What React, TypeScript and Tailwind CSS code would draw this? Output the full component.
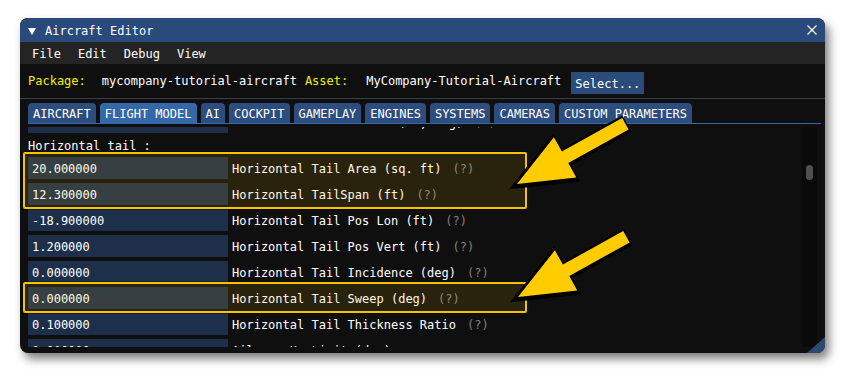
import React from "react";

const rows = [
  { v: "20.000000", l: "Horizontal Tail Area (sq. ft)" },
  { v: "12.300000", l: "Horizontal TailSpan (ft)" },
  { v: "-18.900000", l: "Horizontal Tail Pos Lon (ft)" },
  { v: "1.200000", l: "Horizontal Tail Pos Vert (ft)" },
  { v: "0.000000", l: "Horizontal Tail Incidence (deg)" },
  { v: "0.000000", l: "Horizontal Tail Sweep (deg)" },
  { v: "0.100000", l: "Horizontal Tail Thickness Ratio" },
  { v: "0.000000", l: "Aileron Up Limit (deg)" },
];

const tabs = [
  "AIRCRAFT",
  "FLIGHT MODEL",
  "AI",
  "COCKPIT",
  "GAMEPLAY",
  "ENGINES",
  "SYSTEMS",
  "CAMERAS",
  "CUSTOM PARAMETERS",
];

function Row({ v, l, help = true }: { v: string; l: string; help?: boolean }) {
  return (
    <div className="flex items-center h-[22px] shrink-0 pt-[1px]">
      <div className="w-[200px] h-[22px] -mt-[1px] bg-[#1d2f4b] px-[4px] pt-[1px] flex items-center">{v}</div>
      <div className="ml-[4px] whitespace-pre">{l}</div>
      {help && <div className="ml-[11px] text-[#808080]">(?)</div>}
    </div>
  );
}

// yellow callout arrow, tip at (517,184)
const arrow =
  "517,184 576.3,177.4 568.3,163 628.6,129.4 622.2,118 561.9,151.6 553.9,137.2";

export default function App() {
  return (
    <div className="relative w-[845px] h-[376px] overflow-hidden bg-white pt-[18px] pl-[20px] font-['DejaVu_Sans_Mono',monospace] text-[12px] text-white">
      {/* editor window */}
      <div className="relative w-[805px] h-[335px] bg-[#0f0f0f] rounded-[8px] overflow-hidden flex flex-col shadow-[4px_6px_10px_rgba(0,0,0,0.5)]">
        <div className="h-[24px] shrink-0 bg-[#294a7a] flex items-center pl-[8px] pr-[8px] pt-[2px]">
          <svg width="8" height="7" viewBox="0 0 8 7">
            <path d="M0 0 L8 0 L4 7 Z" fill="#fff" />
          </svg>
          <span className="ml-[9px]">Aircraft Editor</span>
          <svg className="ml-auto -mt-[2px]" width="10" height="10" viewBox="0 0 10 10">
            <path d="M0.5 0.5 L9.5 9.5 M9.5 0.5 L0.5 9.5" stroke="#fff" strokeWidth="1.2" />
          </svg>
        </div>

        <div className="h-[22px] shrink-0 bg-[#242424] flex items-center pl-[12px] gap-[17px] pt-[1px]">
          <span>File</span>
          <span>Edit</span>
          <span>Debug</span>
          <span>View</span>
        </div>

        <div className="mt-[8px] h-[22px] shrink-0 flex items-start px-[8px] leading-[16px]">
          <span className="pt-[1px] text-[#f0f000]">Package:</span>
          <span className="pt-[1px] ml-[16px]">mycompany-tutorial-aircraft</span>
          <span className="pt-[1px] ml-[8px] text-[#f0f000]">Asset:</span>
          <span className="pt-[1px] ml-[18px]">MyCompany-Tutorial-Aircraft</span>
          <div className="ml-[10px] h-[22px] w-[73px] bg-[#2b4b7b] px-[4px] pt-[1px] flex items-center">Select...</div>
        </div>

        <div className="mt-[4px] h-px shrink-0 bg-[#3e3e47]" />

        <div className="mt-[4px] ml-[8px] mr-[4px] shrink-0 flex flex-col">
          <div className="h-[20px] flex gap-[4px]">
            {tabs.map((t) => (
              <div
                key={t}
                className={`shrink-0 whitespace-nowrap px-[5px] pt-[2px] rounded-t-[4px] flex items-center leading-[14px] ${
                  t === "FLIGHT MODEL" ? "bg-[#3568a8]" : "bg-[#2d4d7e]"
                }`}
              >
                {t}
              </div>
            ))}
          </div>
          <div className="h-px bg-[#3568a8]" />
        </div>

        <div className="mt-[3px] h-[220px] shrink-0 flex pl-[8px]">
          <div className="w-[774px] h-[220px] overflow-hidden">
            <div className="-mt-[16px] flex flex-col gap-[4px]">
              <Row v="0.000000" l="Horizontal Tail Moment (ft, deg)" />
              <div className="h-[16px] leading-[16px] pt-[1px] shrink-0">Horizontal tail :</div>
              {rows.map((r, i) => (
                <Row key={i} v={r.v} l={r.l} help={!r.l.startsWith("Aileron")} />
              ))}
            </div>
          </div>
          <div className="w-[15px] h-[220px] bg-[#0a0a0a] pt-[38px] px-[4px]">
            <div className="h-[15px] rounded-[4px] bg-[#4f4f4f]" />
          </div>
        </div>

        {/* resize grip */}
        <svg className="absolute right-0 bottom-0" width="18" height="16" viewBox="0 0 18 16">
          <path d="M18 0 L18 16 L0 16 Z" fill="#2b4a72" />
        </svg>
      </div>

      {/* callout boxes */}
      <div className="absolute left-[23px] top-[152px] w-[504px] h-[57px] border-2 border-[#f5c400] rounded-[2px] bg-[#ffc800]/[0.11] shadow-[0_0_0_1px_rgba(0,0,0,0.35)]" />
      <div className="absolute left-[23px] top-[282px] w-[504px] h-[31px] border-2 border-[#f5c400] rounded-[2px] bg-[#ffc800]/[0.11] shadow-[0_0_0_1px_rgba(0,0,0,0.35)]" />

      {/* callout arrows */}
      <svg className="absolute left-0 top-0 pointer-events-none" width="845" height="376" viewBox="0 0 845 376">
        {[0, 113].map((dy) => (
          <g key={dy} transform={`translate(${dy ? 1 : 0},${dy})`}>
            <polygon points={arrow} fill="#000" stroke="#000" strokeWidth="6" strokeLinejoin="miter" transform="translate(-1,1.5)" />
            <polygon points={arrow} fill="#ffcc00" />
          </g>
        ))}
      </svg>
    </div>
  );
}
